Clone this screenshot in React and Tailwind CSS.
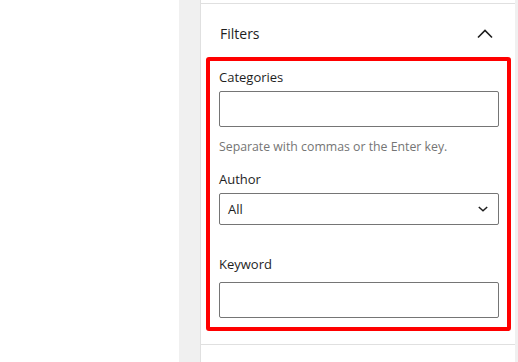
import React from 'react'

const ChevronUp = () => (
  <svg width="16" height="10" viewBox="0 0 16 10" className="text-[#1e1e1e]">
    <path d="M1 8.5l7-7 7 7" fill="none" stroke="currentColor" strokeWidth="1.6" />
  </svg>
)

const ChevronDown = () => (
  <svg width="10" height="6" viewBox="0 0 10 6" className="text-[#1e1e1e]">
    <path d="M0.8 1l4.2 3.8 4.2-3.8" fill="none" stroke="currentColor" strokeWidth="1.5" />
  </svg>
)

const App = () => {
  return (
    <div className="flex h-[362px] w-[518px] overflow-hidden bg-white text-[#1e1e1e] font-['Open_Sans','Noto_Sans',sans-serif]">
      <div className="w-[179px] shrink-0 bg-white" />
      <div className="w-[21px] shrink-0 bg-[#f0f0f0]" />
      <div className="flex-1 flex flex-col border-l border-[#e0e0e0] bg-white">
        <div className="h-[4px] border-b border-[#e0e0e0]" />

        <div className="border-b border-[#e0e0e0] pb-[13px]">
          <div className="flex items-center justify-between h-[20px] mt-[20px] pl-[19px] pr-[22px]">
            <span className="text-[14px] leading-[20px]">Filters</span>
            <ChevronUp />
          </div>

          <div className="mt-[13px] ml-[5px] mr-[4px] border-4 border-[#ff0000] rounded-[3px] pt-[6px] pb-[9px] pl-[9px] pr-[8px]">
            <label className="block text-[13px] leading-[20px]">Categories</label>
            <div className="mt-[4px] h-[36px] border border-[#757575] rounded-[2px] bg-white" />
            <p className="mt-[12px] text-[12.3px] leading-[16px] text-[#757575]">
              Separate with commas or the Enter key.
            </p>

            <label className="block mt-[14px] text-[13px] leading-[20px]">Author</label>
            <div className="mt-[4px] h-[32px] border border-[#757575] rounded-[2px] flex items-center justify-between pl-[8px] pr-[10px]">
              <span className="text-[13px] leading-[20px]">All</span>
              <ChevronDown />
            </div>

            <label className="block mt-[29px] text-[13px] leading-[20px]">Keyword</label>
            <div className="mt-[8px] h-[36px] border border-[#757575] rounded-[2px] bg-white" />
          </div>
        </div>
      </div>
      <div className="w-[3px] shrink-0 bg-[#f0f0f0]" />
    </div>
  )
}

export default App
